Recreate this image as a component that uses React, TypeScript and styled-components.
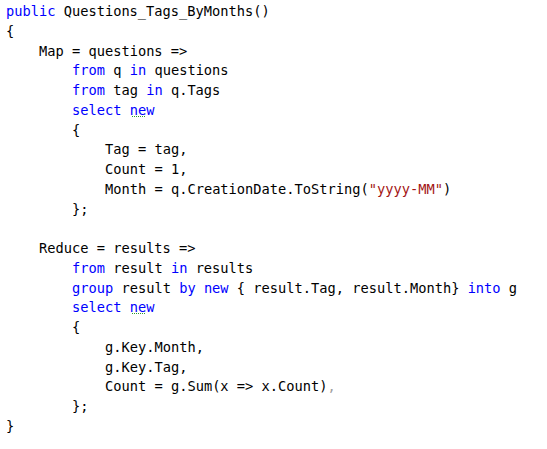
import React from "react";
import styled, { createGlobalStyle } from "styled-components";

const Global = createGlobalStyle`
  html, body { margin: 0; padding: 0; background: #ffffff; }
  body { width: 547px; height: 449px; overflow: hidden; }
`;

const Code = styled.div`
  padding: 2px 0 0 6px;
  font-family: "DejaVu Sans Mono", "Liberation Mono", monospace;
  font-size: 13.7px;
  line-height: 19.76px;
  color: #000000;
  white-space: pre;
`;

const Line = styled.div<{ $indent: number }>`
  height: 19.76px;
  padding-left: ${(p) => p.$indent * 33}px;
`;

const Kw = styled.span`
  color: #0000ff;
`;

const Str = styled.span`
  color: #a31515;
`;

const Dim = styled.span`
  color: #a0a0a0;
`;

const Squiggle = styled.span`
  position: relative;
  &::after {
    content: "";
    position: absolute;
    left: 2px;
    bottom: 1px;
    width: 13px;
    height: 1px;
    background-image: linear-gradient(to right, #2e9a2e 50%, transparent 50%);
    background-size: 2px 1px;
  }
`;

type Row = { indent: number; content: React.ReactNode };

const rows: Row[] = [
  { indent: 0, content: <><Kw>public</Kw> Questions_Tags_ByMonths()</> },
  { indent: 0, content: "{" },
  { indent: 1, content: "Map = questions =>" },
  { indent: 2, content: <><Kw>from</Kw> q <Kw>in</Kw> questions</> },
  { indent: 2, content: <><Kw>from</Kw> tag <Kw>in</Kw> q.Tags</> },
  { indent: 2, content: <><Kw>select</Kw> <Squiggle><Kw>new</Kw></Squiggle></> },
  { indent: 2, content: "{" },
  { indent: 3, content: "Tag = tag," },
  { indent: 3, content: "Count = 1," },
  { indent: 3, content: <>Month = q.CreationDate.ToString(<Str>"yyyy-MM"</Str>)</> },
  { indent: 2, content: "};" },
  { indent: 0, content: "" },
  { indent: 1, content: "Reduce = results =>" },
  { indent: 2, content: <><Kw>from</Kw> result <Kw>in</Kw> results</> },
  { indent: 2, content: <><Kw>group</Kw> result <Kw>by</Kw> <Kw>new</Kw> {"{"} result.Tag, result.Month{"}"} <Kw>into</Kw> g</> },
  { indent: 2, content: <><Kw>select</Kw> <Squiggle><Kw>new</Kw></Squiggle></> },
  { indent: 2, content: "{" },
  { indent: 3, content: "g.Key.Month," },
  { indent: 3, content: "g.Key.Tag," },
  { indent: 3, content: <>Count = g.Sum(x =&gt; x.Count)<Dim>,</Dim></> },
  { indent: 2, content: "};" },
  { indent: 0, content: "}" },
];

export default function App() {
  return (
    <>
      <Global />
      <Code>
        {rows.map((r, i) => (
          <Line key={i} $indent={r.indent}>{r.content}</Line>
        ))}
      </Code>
    </>
  );
}
